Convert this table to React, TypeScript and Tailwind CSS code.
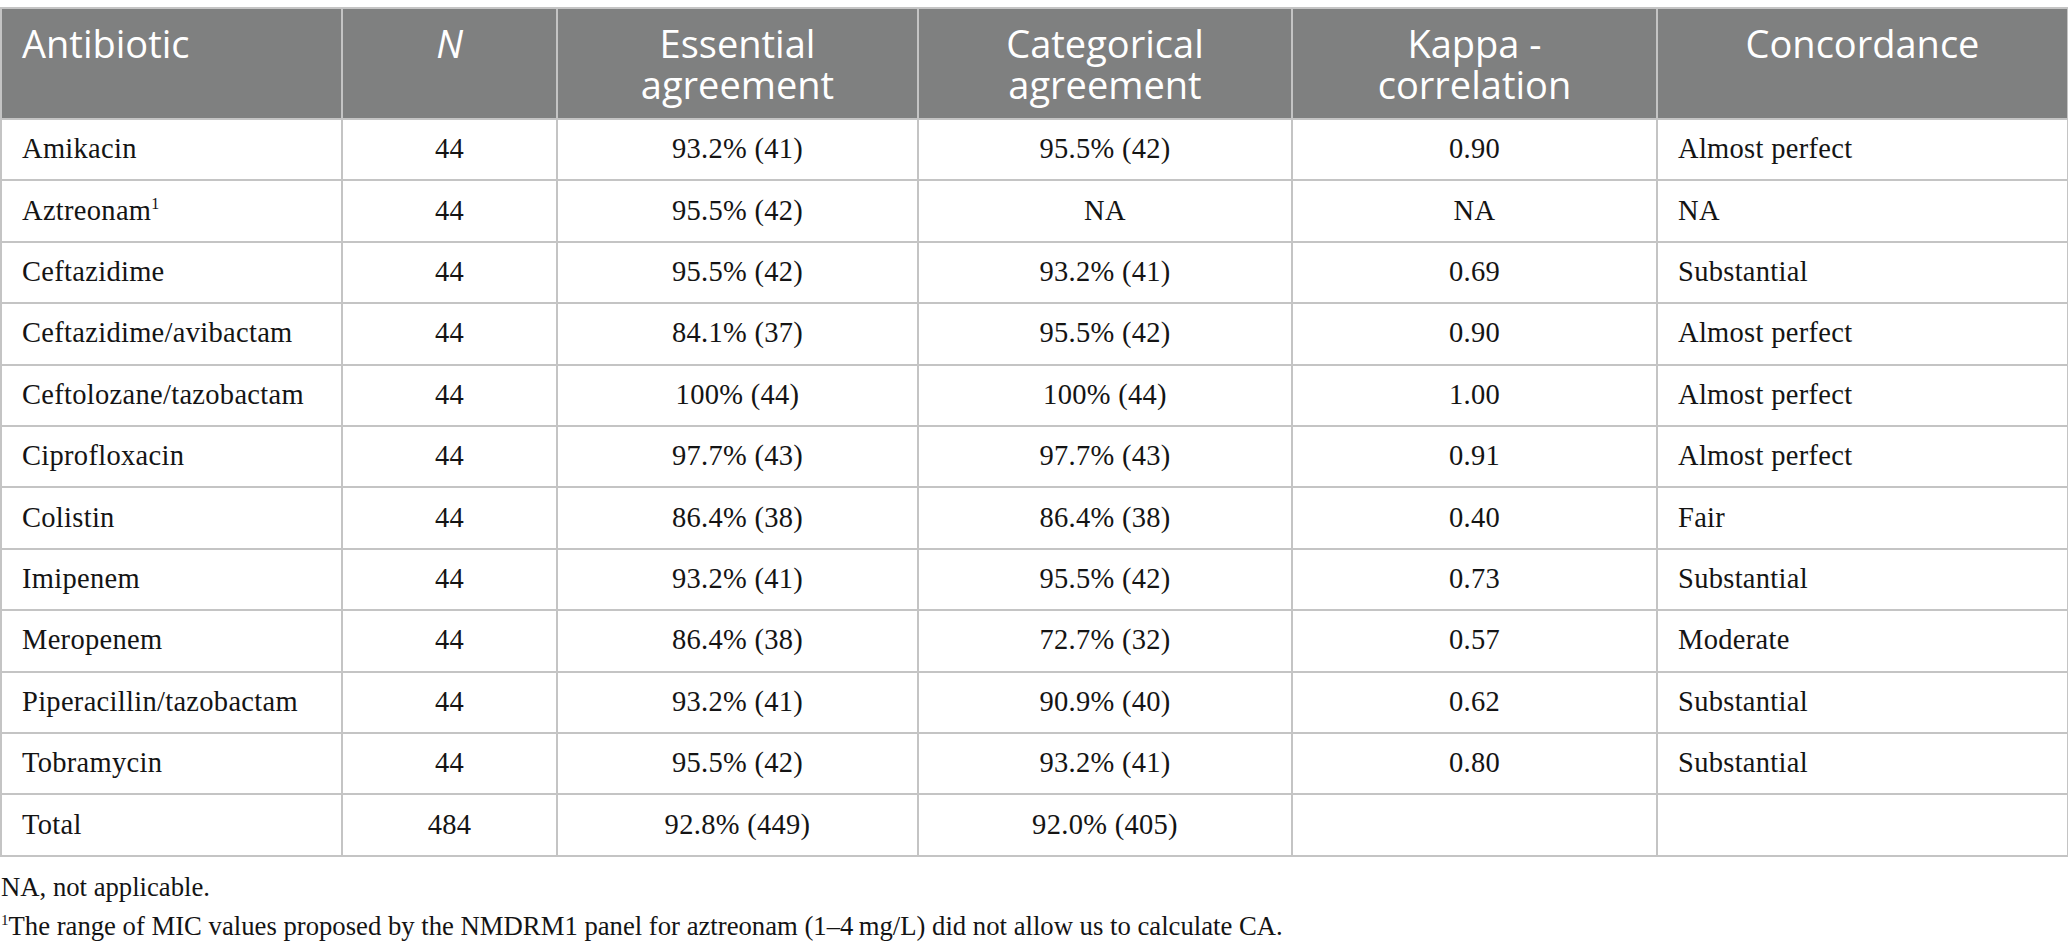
const rows: [string, string, string, string, string, string, boolean?][] = [
  ['Amikacin', '44', '93.2% (41)', '95.5% (42)', '0.90', 'Almost perfect'],
  ['Aztreonam', '44', '95.5% (42)', 'NA', 'NA', 'NA', true],
  ['Ceftazidime', '44', '95.5% (42)', '93.2% (41)', '0.69', 'Substantial'],
  ['Ceftazidime/avibactam', '44', '84.1% (37)', '95.5% (42)', '0.90', 'Almost perfect'],
  ['Ceftolozane/tazobactam', '44', '100% (44)', '100% (44)', '1.00', 'Almost perfect'],
  ['Ciprofloxacin', '44', '97.7% (43)', '97.7% (43)', '0.91', 'Almost perfect'],
  ['Colistin', '44', '86.4% (38)', '86.4% (38)', '0.40', 'Fair'],
  ['Imipenem', '44', '93.2% (41)', '95.5% (42)', '0.73', 'Substantial'],
  ['Meropenem', '44', '86.4% (38)', '72.7% (32)', '0.57', 'Moderate'],
  ['Piperacillin/tazobactam', '44', '93.2% (41)', '90.9% (40)', '0.62', 'Substantial'],
  ['Tobramycin', '44', '95.5% (42)', '93.2% (41)', '0.80', 'Substantial'],
  ['Total', '484', '92.8% (449)', '92.0% (405)', '', ''],
];

const th = 'border-2 border-[#c4c4c4] align-top px-5 pt-[14px] pb-[11px] font-normal leading-[41px]';
const td = 'border-2 border-[#c4c4c4] h-[61.4px] px-5 py-0 align-middle';

export default function App() {
  return (
    <div className="w-[2068px] h-[949px] bg-white overflow-hidden">
      <table className="mt-[7px] w-[2067px] table-fixed border-collapse">
        <colgroup>
          <col className="w-[341px]" />
          <col className="w-[215px]" />
          <col className="w-[361px]" />
          <col className="w-[374px]" />
          <col className="w-[365px]" />
          <col className="w-[411px]" />
        </colgroup>
        <thead>
          <tr className="bg-[#7f8080] text-white text-[38px] font-['Open_Sans',sans-serif] h-[111px]">
            <th className={`${th} text-left`}>Antibiotic</th>
            <th className={`${th} text-center italic`}>N</th>
            <th className={`${th} text-center`}>Essential<br />agreement</th>
            <th className={`${th} text-center`}>Categorical<br />agreement</th>
            <th className={`${th} text-center`}>Kappa -<br />correlation</th>
            <th className={`${th} text-center`}>Concordance</th>
          </tr>
        </thead>
        <tbody className="font-['Liberation_Serif',serif] text-[28.5px] tracking-[0.3px] text-[#141414]">
          {rows.map((r) => (
            <tr key={r[0]}>
              <td className={`${td} text-left`}>
                {r[0]}
                {r[6] && <sup className="text-[16px] -top-[11px]">1</sup>}
              </td>
              <td className={`${td} text-center`}>{r[1]}</td>
              <td className={`${td} text-center`}>{r[2]}</td>
              <td className={`${td} text-center`}>{r[3]}</td>
              <td className={`${td} text-center`}>{r[4]}</td>
              <td className={`${td} text-left`}>{r[5]}</td>
            </tr>
          ))}
        </tbody>
      </table>
      <div className="mt-[11px] font-['Liberation_Serif',serif] text-[26.7px] leading-[39px] text-[#141414] pl-[1px]">
        <p>NA, not applicable.</p>
        <p>
          <sup className="text-[15px] -top-[10px]">1</sup>The range of MIC values proposed by the NMDRM1 panel for aztreonam (1–4&thinsp;mg/L) did not allow us to calculate CA.
        </p>
      </div>
    </div>
  );
}
